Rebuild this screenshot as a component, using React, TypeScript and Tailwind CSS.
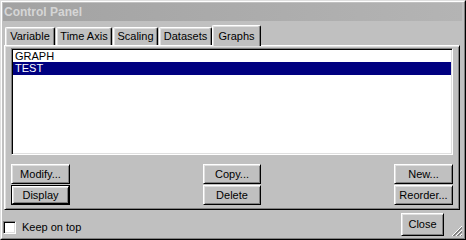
import React from 'react';

const raised =
  'border border-t-white border-l-white border-r-black border-b-black shadow-[inset_1px_1px_#dfdfdf,inset_-1px_-1px_#808080]';
const sunken =
  'border border-t-[#808080] border-l-[#808080] border-r-white border-b-white shadow-[inset_1px_1px_#000,inset_-1px_-1px_#dfdfdf]';

function Btn({ label, w, h = 20, isDefault = false }: { label: string; w: string; h?: number; isDefault?: boolean }) {
  const inner = (
    <div
      className={`${raised} flex items-center justify-center bg-[#c0c0c0] text-[11px] text-black ${isDefault ? 'h-full w-full' : ''}`}
      style={isDefault ? undefined : { height: h }}
    >
      {label}
    </div>
  );
  if (isDefault) {
    return (
      <div className={`${w} border border-black`} style={{ height: h }}>
        {inner}
      </div>
    );
  }
  return <div className={w}>{inner}</div>;
}

const tabs = [
  { name: 'Variable', w: 'w-[50px]' },
  { name: 'Time Axis', w: 'w-[56px]' },
  { name: 'Scaling', w: 'w-[45px]' },
  { name: 'Datasets', w: 'w-[53px]' },
];

export default function App() {
  return (
    <div className="w-[466px] h-[240px] bg-[#c0c0c0] font-['Liberation_Sans',Arial,sans-serif] border border-t-[#dfdfdf] border-l-[#dfdfdf] border-r-black border-b-black overflow-hidden">
      <div className="h-full border border-t-white border-l-white border-r-[#808080] border-b-[#808080] p-[1px] flex flex-col">
        {/* title bar */}
        <div className="h-[18px] w-[459px] bg-gradient-to-r from-[#a2a2a2] to-[#b4b4b4] flex items-center pl-[1px]">
          <span className="text-[12px] font-bold text-[#d6d6d6]">Control Panel</span>
        </div>

        {/* tabs */}
        <div className="mt-[2px] h-[22px] flex items-end pl-[2px] text-[11px] text-black">
          {tabs.map((t) => (
            <div
              key={t.name}
              className={`${t.w} mr-[1px] h-[18px] flex items-center justify-center rounded-t-[2px] border border-b-0 border-t-white border-l-white border-r-black shadow-[inset_-1px_0_#808080,inset_1px_1px_#dfdfdf]`}
            >
              {t.name}
            </div>
          ))}
          <div className="relative z-10 w-[49px] h-[21px] -mb-[1px] -ml-[1px] flex items-start pt-[2px] justify-center rounded-t-[2px] border border-b-0 border-t-white border-l-white border-r-black bg-[#c0c0c0] shadow-[inset_-1px_0_#808080,inset_1px_1px_#dfdfdf]">
            Graphs
          </div>
        </div>

        {/* panel */}
        <div className="ml-[1px] w-[456px] h-[165px] border border-t-white border-l-white border-r-black border-b-black shadow-[inset_1px_1px_#dfdfdf,inset_-1px_-1px_#808080] pl-[6px] pt-[2px]">
          <div className={`${sunken} w-[442px] h-[107px] bg-white p-[1px] text-[11px]`}>
            <div className="h-[12px] leading-[12px] pl-[2px] text-black">GRAPH</div>
            <div className="h-[13px] leading-[13px] pl-[2px] bg-[#000080] text-white">TEST</div>
          </div>

          <div className="w-[442px] mt-[9px] flex justify-between">
            <div className="flex flex-col gap-[1px]">
              <Btn label="Modify..." w="w-[59px]" />
              <Btn label="Display" w="w-[59px]" isDefault />
            </div>
            <div className="flex flex-col gap-[1px]">
              <Btn label="Copy..." w="w-[58px]" />
              <Btn label="Delete" w="w-[58px]" />
            </div>
            <div className="flex flex-col gap-[1px]">
              <Btn label="New..." w="w-[59px]" />
              <Btn label="Reorder..." w="w-[59px]" />
            </div>
          </div>
        </div>

        {/* bottom row */}
        <div className="flex-1 flex items-start relative">
          <div className="flex items-center mt-[9px]">
            <div className={`${sunken} w-[13px] h-[13px] bg-white`} />
            <span className="ml-[6px] text-[11px] text-black">Keep on top</span>
          </div>
          <div className="ml-auto mr-[19px] mt-[3px]">
            <Btn label="Close" w="w-[43px]" h={23} />
          </div>
          <svg className="absolute right-0 bottom-0" width="12" height="12" viewBox="0 0 12 12">
            <line x1="11" y1="1" x2="1" y2="11" stroke="#ffffff" />
            <line x1="11" y1="2" x2="2" y2="11" stroke="#808080" />
            <line x1="11" y1="3" x2="3" y2="11" stroke="#808080" />
            <line x1="11" y1="5" x2="5" y2="11" stroke="#ffffff" />
            <line x1="11" y1="6" x2="6" y2="11" stroke="#808080" />
            <line x1="11" y1="7" x2="7" y2="11" stroke="#808080" />
            <line x1="11" y1="9" x2="9" y2="11" stroke="#ffffff" />
            <line x1="11" y1="10" x2="10" y2="11" stroke="#808080" />
          </svg>
        </div>
      </div>
    </div>
  );
}
